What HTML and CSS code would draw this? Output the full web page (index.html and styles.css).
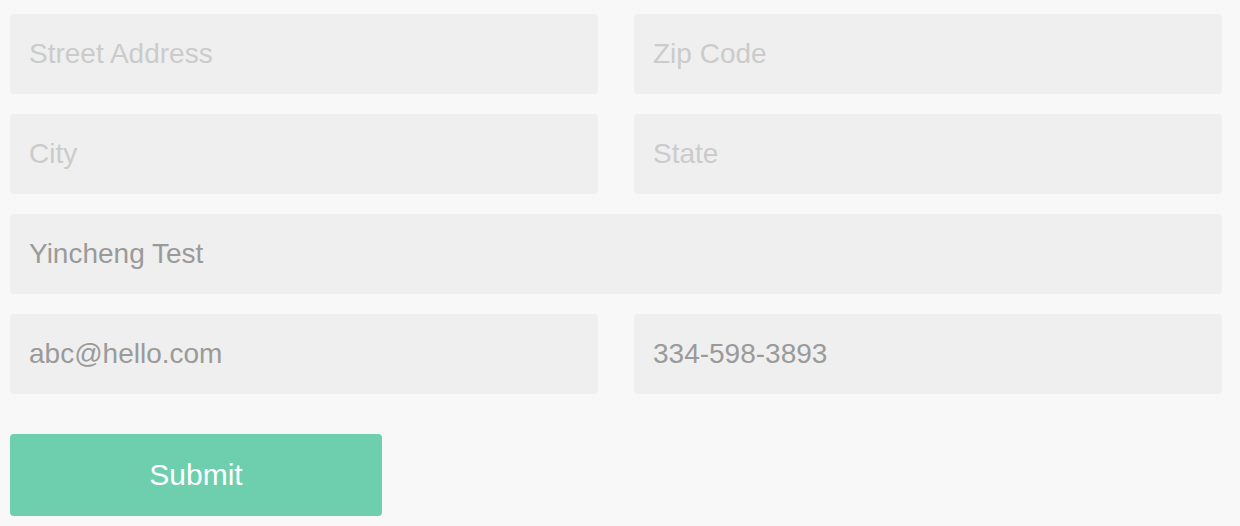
FILE: index.html
```html
<!DOCTYPE html>
<html lang="en">
<head>
    <meta charset="UTF-8">
    <meta name="viewport" content="width=device-width, initial-scale=1.0">
    <link rel="stylesheet" href="styles.css">
    <title>Address Form</title>
</head>
<body>
    <form class="address-form">
        <div class="form-grid">
            <input type="text" class="field" placeholder="Street Address">
            <input type="text" class="field" placeholder="Zip Code">
            <input type="text" class="field" placeholder="City">
            <input type="text" class="field" placeholder="State">
            <input type="text" class="field full" placeholder="Name" value="Yincheng Test">
            <input type="email" class="field" placeholder="Email" value="abc@hello.com">
            <input type="tel" class="field" placeholder="Phone" value="334-598-3893">
        </div>
        <button type="button" class="submit-btn">Submit</button>
    </form>
</body>
</html>
```

FILE: styles.css
```css
body {
    margin: 0;
    background-color: #f8f8f8;
    font-family: 'Liberation Sans', Arial, sans-serif;
}
.address-form {
    width: 1212px;
    padding: 14px 0 0 10px;
}
.form-grid {
    display: grid;
    grid-template-columns: 588px 588px;
    column-gap: 36px;
    row-gap: 20px;
}
.field {
    box-sizing: border-box;
    height: 80px;
    padding: 0 19px;
    border: none;
    border-radius: 4px;
    background-color: #efefef;
    font-family: inherit;
    font-size: 28px;
    color: #9a9a9a;
    outline: none;
}
.field::placeholder {
    color: #cbcbcb;
}
.full {
    grid-column: 1 / 3;
}
.submit-btn {
    display: block;
    margin-top: 40px;
    width: 372px;
    height: 82px;
    border: none;
    border-radius: 4px;
    background-color: #6dcfad;
    color: #fff;
    font-family: inherit;
    font-size: 30px;
    cursor: pointer;
}
```
